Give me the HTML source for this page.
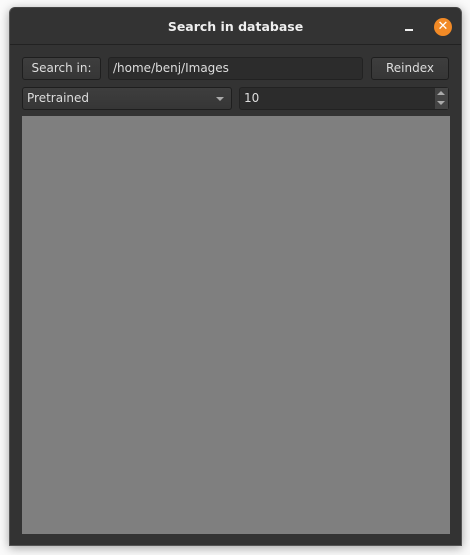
<!DOCTYPE html>
<html><head><style>
body{margin:0;width:470px;height:555px;background:#fafafa;position:relative;overflow:hidden;font-family:"DejaVu Sans","Liberation Sans",sans-serif;}
.win{position:absolute;left:9px;top:7px;width:451px;height:537px;background:#333;border:1px solid #555;border-top-color:#444;border-radius:6px 6px 0 0;box-shadow:0 2px 10px rgba(0,0,0,.35);}
.title{position:absolute;left:0;top:0;width:100%;height:36px;border-bottom:1px solid #222;color:#eee;font-weight:bold;font-size:12.5px;text-align:center;line-height:37px;}
.min{position:absolute;left:395px;top:21px;width:8px;height:2px;background:#eee;}
.close{position:absolute;left:424px;top:10px;width:18px;height:18px;border-radius:50%;background:#f28a26;color:#fff;font-size:13px;font-weight:bold;text-align:center;line-height:18px;}
.el{position:absolute;box-sizing:border-box;border:1px solid #222;border-radius:3px;color:#ddd;font-size:12px;line-height:20px;}
.btn{background:linear-gradient(#3e3e3e,#363636);text-align:center;border-color:#1e1e1e;}
.fld{background:#2c2c2c;padding-left:4px;}
.gray{position:absolute;left:12px;top:108px;width:428px;height:418px;background:#7f7f7f;}
</style></head><body>
<div class="win">
<div class="title">Search in database</div>
<div class="min"></div>
<div class="close">✕</div>
<div class="el btn" style="left:12px;top:49px;width:79px;height:23px;">Search in:</div>
<div class="el fld" style="left:98px;top:49px;width:255px;height:23px;">/home/benj/Images</div>
<div class="el btn" style="left:361px;top:49px;width:78px;height:23px;">Reindex</div>
<div class="el btn" style="left:12px;top:79px;width:210px;height:23px;text-align:left;padding-left:4px;">Pretrained<span style="position:absolute;right:7px;top:9px;border:4px solid transparent;border-top:4px solid #aaa;border-bottom:0;"></span></div>
<div class="el fld" style="left:229px;top:79px;width:210px;height:23px;">10<span style="position:absolute;right:0;top:0;width:13px;height:21px;background:#444;"><span style="position:absolute;left:2px;top:3px;border:4px solid transparent;border-bottom:4px solid #aaa;border-top:0;"></span><span style="position:absolute;left:2px;top:13px;border:4px solid transparent;border-top:4px solid #aaa;border-bottom:0;"></span></span></div>
<div class="gray"></div>
</div>
</body></html>
